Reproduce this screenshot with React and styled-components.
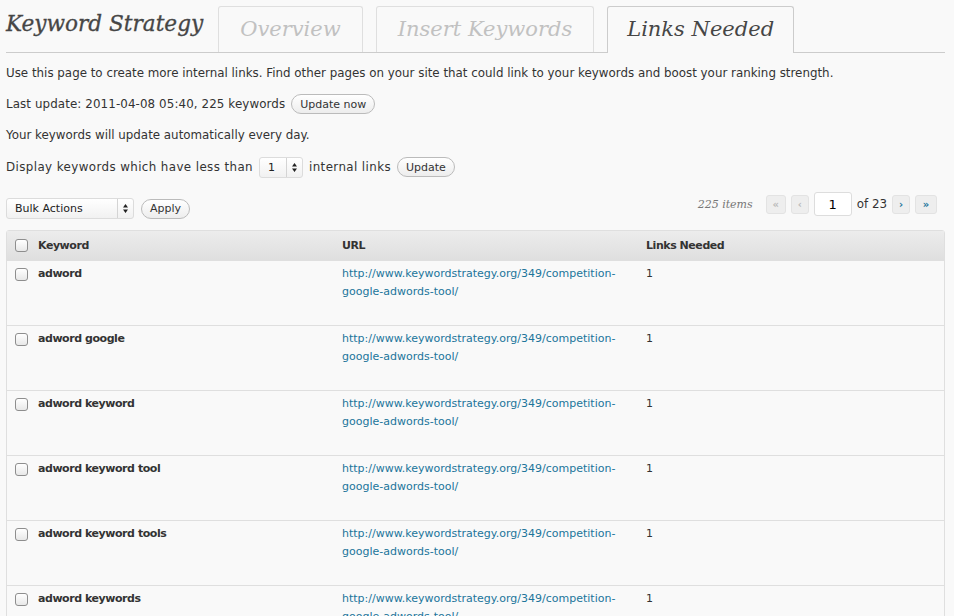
import React from 'react'
import styled, { createGlobalStyle } from 'styled-components'

const GlobalStyle = createGlobalStyle`
  html, body {
    margin: 0;
    padding: 0;
    background: #f9f9f9;
  }
  body {
    font-family: "DejaVu Sans", "Liberation Sans", sans-serif;
    font-size: 11.87px;
    color: #333;
  }
`

const rows = [
  'adword',
  'adword google',
  'adword keyword',
  'adword keyword tool',
  'adword keyword tools',
  'adword keywords',
  'adwords keyword',
]

const Wrap = styled.div`
  padding: 0 9px 0 6px;
`

const Head = styled.div`
  display: flex;
  align-items: flex-end;
  border-bottom: 1px solid #ccc;
  height: 52px;
`

const Title = styled.h2`
  margin: 0 15px 16px 0;
  font-family: "DejaVu Serif", Georgia, serif;
  font-style: italic;
  font-weight: normal;
  font-size: 21.6px;
  color: #464646;
  -webkit-text-stroke: 0.3px #464646;
`

const Tab = styled.div`
  box-sizing: border-box;
  height: ${({ $active }) => ($active ? '47px' : '46px')};
  margin: 0 13px ${({ $active }) => ($active ? '-1px' : '0')} 0;
  padding: 10px ${({ $active }) => ($active ? 19 : 21)}px 0;
  border: 1px solid ${({ $active }) => ($active ? '#ccc' : '#dfdfdf')};
  border-bottom: none;
  border-radius: 3px 3px 0 0;
  background: #f9f9f9;
  font-family: "DejaVu Serif", Georgia, serif;
  font-style: italic;
  font-size: 21px;
  color: ${({ $active }) => ($active ? '#464646' : '#c1c1c1')};
`

const Para = styled.p`
  margin: ${({ $m }) => $m || '0'};
  display: flex;
  align-items: center;
  gap: 6px;
  height: 22px;
  letter-spacing: ${({ $ls }) => $ls || 0}px;
`

const Pill = styled.button`
  font-family: "DejaVu Sans", sans-serif;
  font-size: 11px;
  letter-spacing: 0;
  color: #333;
  height: 20px;
  padding: 0 8px;
  border: 1px solid #bbb;
  border-radius: 11px;
  background: linear-gradient(#fff, #ededed);
`

const Select = styled.div`
  box-sizing: border-box;
  display: flex;
  align-items: center;
  width: ${({ $w }) => $w}px;
  height: 21px;
  border: 1px solid #dcdcdc;
  border-radius: 3px;
  background: linear-gradient(#fff, #f1f1f1);
  font-size: 11px;
  letter-spacing: 0;
  color: #222;
`

const SelectText = styled.span`
  flex: 1;
  padding-left: 8px;
`

const SelectArrow = styled.span`
  width: 15px;
  height: 100%;
  border-left: 1px solid #d4d4d4;
  display: flex;
  align-items: center;
  justify-content: center;
`

const Nav = styled.div`
  display: flex;
  align-items: center;
  justify-content: space-between;
  margin-top: 12px;
  height: 28px;
`

const Left = styled.div`
  display: flex;
  align-items: center;
  gap: 7px;
  margin-top: 9px;
`

const Pager = styled.div`
  display: flex;
  align-items: center;
  gap: 5px;
  margin-right: 8px;
`

const Count = styled.span`
  font-family: "DejaVu Serif", Georgia, serif;
  font-style: italic;
  font-size: 11px;
  color: #777;
  margin-right: 8px;
`

const PageBtn = styled.span`
  box-sizing: border-box;
  min-width: ${({ $w }) => $w || 18}px;
  height: 19px;
  border: 1px solid #e3e3e3;
  border-radius: 3px;
  background: #eee;
  display: flex;
  align-items: center;
  justify-content: center;
  font-size: 10px;
  font-weight: bold;
  color: ${({ $on }) => ($on ? '#21759b' : '#bbb')};
`

const PageInput = styled.span`
  box-sizing: border-box;
  width: 38px;
  height: 24px;
  border: 1px solid #ddd;
  border-radius: 3px;
  background: #fff;
  display: flex;
  align-items: center;
  justify-content: center;
  font-size: 13px;
  color: #000;
`

const Table = styled.div`
  margin-top: 12px;
  border: 1px solid #dfdfdf;
  border-radius: 3px 3px 0 0;
  font-size: 11px;
`

const Row = styled.div`
  display: grid;
  grid-template-columns: 31px 304px 304px 1fr;
  box-sizing: border-box;
  height: ${({ $head }) => ($head ? 29 : 65)}px;
  background: ${({ $head }) => ($head ? 'linear-gradient(#ececec, #dfdfdf)' : '#f9f9f9')};
  border-top: ${({ $head }) => ($head ? 'none' : '1px solid #dfdfdf')};
  line-height: 18px;
`

const Cell = styled.div`
  padding-top: ${({ $head }) => ($head ? 6 : 4)}px;
  font-weight: ${({ $bold }) => ($bold ? 'bold' : 'normal')};
  letter-spacing: ${({ $bold }) => ($bold ? '-0.45px' : '0')};
  color: ${({ $link }) => ($link ? '#21759b' : '#333')};
`

const CheckCell = styled.div`
  padding: ${({ $head }) => ($head ? 8 : 7)}px 0 0 8px;
`

const Box = styled.span`
  display: block;
  box-sizing: border-box;
  width: 13px;
  height: 13px;
  border: 1px solid #8e8e8e;
  border-radius: 3px;
  background: linear-gradient(#fff, #e8e8e8);
`

const Arrows = () => (
  <svg width="7" height="11" viewBox="0 0 7 11">
    <path d="M3.5 1 L6 4.5 H1 Z M3.5 10 L6 6.5 H1 Z" fill="#222" />
  </svg>
)

const url = 'http://www.keywordstrategy.org/349/competition-'

export default function App() {
  return (
    <Wrap>
      <GlobalStyle />
      <Head>
        <Title>Keyword Strategy</Title>
        <Tab>Overview</Tab>
        <Tab>Insert Keywords</Tab>
        <Tab $active>Links Needed</Tab>
      </Head>

      <Para $m="9px 0 0">Use this page to create more internal links. Find other pages on your site that could link to your keywords and boost your ranking strength.</Para>
      <Para $m="9px 0 0" $ls={0.1}>
        Last update: 2011-04-08 05:40, 225 keywords <Pill>Update now</Pill>
      </Para>
      <Para $m="9px 0 0">Your keywords will update automatically every day.</Para>
      <Para $m="10px 0 0" $ls={0.4}>
        Display keywords which have less than
        <Select $w={44}>
          <SelectText>1</SelectText>
          <SelectArrow><Arrows /></SelectArrow>
        </Select>
        internal links <Pill>Update</Pill>
      </Para>

      <Nav>
        <Left>
          <Select $w={128}>
            <SelectText>Bulk Actions</SelectText>
            <SelectArrow><Arrows /></SelectArrow>
          </Select>
          <Pill>Apply</Pill>
        </Left>
        <Pager>
          <Count>225 items</Count>
          <PageBtn $w={20}>«</PageBtn>
          <PageBtn>‹</PageBtn>
          <PageInput>1</PageInput>
          <span>of 23</span>
          <PageBtn $on>›</PageBtn>
          <PageBtn $w={22} $on>»</PageBtn>
        </Pager>
      </Nav>

      <Table>
        <Row $head>
          <CheckCell $head><Box /></CheckCell>
          <Cell $head $bold>Keyword</Cell>
          <Cell $head $bold>URL</Cell>
          <Cell $head $bold>Links Needed</Cell>
        </Row>
        {rows.map((k) => (
          <Row key={k}>
            <CheckCell><Box /></CheckCell>
            <Cell $bold>{k}</Cell>
            <Cell $link>{url}<br />google-adwords-tool/</Cell>
            <Cell>1</Cell>
          </Row>
        ))}
      </Table>
    </Wrap>
  )
}
